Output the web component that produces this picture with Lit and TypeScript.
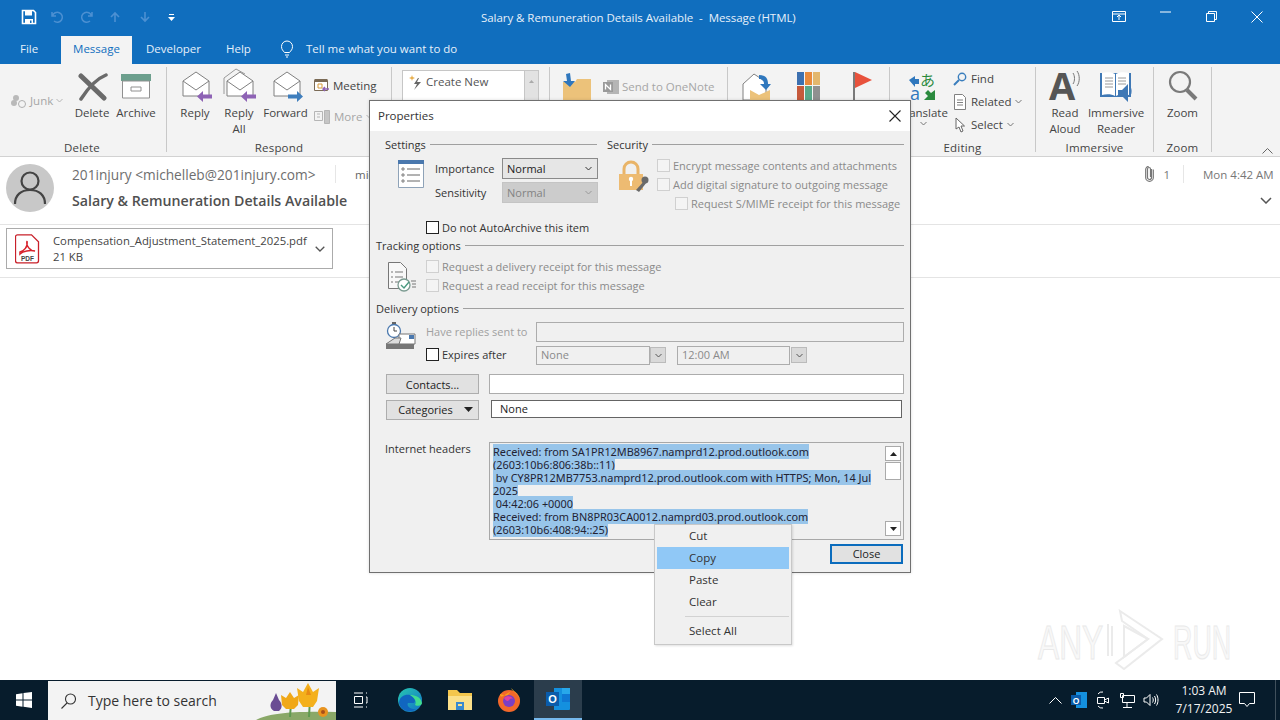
import { LitElement, html, svg, css } from "lit";
import { customElement } from "lit/decorators.js";

const chevron = (c = "#777") => html`<svg class="chev" width="7" height="5" viewBox="0 0 7 5"><path d="M.5 1l3 3 3-3" fill="none" stroke=${c}/></svg>`;

const envelope = (arrow: string, dir: "l" | "r", double = false) => html`<svg width="36" height="38" viewBox="0 0 36 38">
  ${double ? svg`<path d="M3 27V11L15 2l9 5" fill="none" stroke="#999"/>` : ""}
  <path d="M6 14L19 5l13 9v15H6z" fill="#fff" stroke="#808080"/>
  <path d="M6 14l13 9 13-9" fill="none" stroke="#808080"/>
  ${dir === "l"
    ? svg`<path d="M35 27.500H26v-3.500l-6 5.500 6 5.500v-3.500h9z" fill=${arrow}/>`
    : svg`<path d="M20 27.500h9v-3.500l6 5.500-6 5.500v-3.500h-9z" fill=${arrow}/>`}
</svg>`;

const check = (disabled = false) => html`<span class="box ${disabled ? "off" : ""}"></span>`;

@customElement("app-root")
export class AppRoot extends LitElement {
  static styles = css`
    :host {
      display: flex;
      flex-direction: column;
      position: relative;
      width: 1280px;
      height: 720px;
      overflow: hidden;
      background: #fff;
      font-family: "Open Sans", "Noto Sans", sans-serif;
      font-size: 11.5px;
      color: #444;
    }
    svg { display: block; flex: none; }

    /* title + tabs */
    .title {
      height: 36px;
      background: #106ebe;
      color: #e6f0fa;
      display: flex;
      align-items: center;
      flex: none;
      position: relative;
      padding-bottom: 2px;
      box-sizing: border-box;
    }
    .qat { display: flex; align-items: center; padding-left: 21px; width: 400px; }
    .qat span { width: 29.4px; display: flex; }
    .doc { width: 478px; padding-left: 60px; white-space: pre; letter-spacing: -.05px; }
    .winbtns { display: flex; margin-left: auto; padding-right: 0; }
    .winbtns span { width: 46px; display: flex; justify-content: center; }
    .tabs {
      height: 28px;
      background: #106ebe;
      color: #e6f0fa;
      display: flex;
      align-items: stretch;
      flex: none;
    }
    .tabs > span { display: flex; align-items: center; padding-bottom: 3px; box-sizing: border-box; }
    .tab-file { padding-left: 20px; width: 61px; }
    .tab-on { background: #f3f3f3; color: #106ebe; width: 71px; justify-content: center; }
    .tab-dev { margin-left: 14px; width: 80px; }
    .tab-help { width: 54px; }
    .tab-tell { width: 200px; gap: 12px; }

    /* ribbon */
    .ribbon {
      height: 93px;
      flex: none;
      background: #f3f3f3;
      border-bottom: 1px solid #d2d2d2;
      box-sizing: border-box;
      display: flex;
      padding: 3px 0 4px;
      position: relative;
    }
    .group {
      display: flex;
      flex-direction: column;
      border-right: 1px solid #c8c8c8;
      box-sizing: border-box;
      flex: none;
    }
    .items { display: flex; flex: 1; align-items: flex-start; }
    .glabel { text-align: center; height: 12px; line-height: 15px; letter-spacing: .2px; }
    .big {
      display: flex;
      flex-direction: column;
      align-items: center;
      line-height: 16px;
      text-align: center;
      flex: none;
    }
    .big .ico { height: 38px; display: flex; align-items: flex-start; justify-content: center; }
    .small { display: flex; align-items: center; gap: 4px; height: 23px; white-space: nowrap; }
    .dis { color: #a6a6a6; }
    .gallery {
      margin: 3px 0 0 10px;
      width: 137px;
      height: 34px;
      display: flex;
      box-sizing: border-box;
    }
    .gal-main {
      flex: 1;
      background: #fff;
      border: 1px solid #c6c6c6;
      display: flex;
      gap: 3px;
      padding: 3px 0 0 6px;
      align-items: flex-start;
      color: #555;
    }
    .gal-bar { width: 14px; background: #e2e2e2; border: 1px solid #c6c6c6; border-left: 0; display: flex; justify-content: center; padding-top: 9px; box-sizing: border-box; }
    .collapse { position: absolute; right: 7px; bottom: 2px; }
    .loose { overflow: visible; }

    /* message */
    .msg { flex: 1; background: #fff; min-height: 0; }
    .head {
      height: 68px;
      box-sizing: border-box;
      display: flex;
      padding: 7px 8px 0 6px;
      margin-left: 0;
      border-bottom: 1px solid #e4e4e4;
    }
    .avatar {
      width: 48px;
      height: 48px;
      border-radius: 50%;
      background: #c8c8c8;
      display: flex;
      align-items: center;
      justify-content: center;
      flex: none;
    }
    .hcol { flex: 1; margin-left: 18px; }
    .hline { display: flex; align-items: center; height: 22px; margin-top: -1px; }
    .sender { font-size: 13.7px; color: #6e6e6e; white-space: nowrap; width: 263px; }
    .vsep { width: 1px; height: 18px; background: #e6e6e6; flex: none; }
    .to { margin-left: 19px; color: #666; }
    .clip { margin-left: auto; display: flex; gap: 9px; align-items: center; color: #777; }
    .date { color: #777; margin-left: 19px; width: 69px; white-space: nowrap; }
    .subject { display: flex; align-items: center; justify-content: space-between; height: 26px; margin-top: 2px; font-size: 14.2px; font-weight: 600; color: #505050; }
    .attrow { height: 53px; box-sizing: border-box; padding: 3px 0 0 6px; border-bottom: 1px solid #e4e4e4; }
    .att {
      width: 327px;
      height: 41px;
      box-sizing: border-box;
      border: 1px solid #ababab;
      display: flex;
      align-items: center;
      padding-left: 8px;
    }
    .att-text { margin-left: 13px; line-height: 16px; width: 262px; white-space: nowrap; font-size: 11.3px; }

    /* dialog */
    .dlg {
      position: absolute;
      left: 369px;
      top: 100px;
      width: 542px;
      height: 473px;
      box-sizing: border-box;
      border: 1px solid #707070;
      background: #f0f0f0;
      color: #333;
      font-size: 11px;
      box-shadow: 0 0 3px rgba(0,0,0,.15);
    }
    .dtitle { height: 30px; box-sizing: border-box; padding: 0 8px 2px; background: #fff; display: flex; align-items: center; justify-content: space-between; font-size: 11.5px; }
    .dbody { padding: 6px 6px 0 6px; }
    .legend { display: flex; align-items: center; gap: 4px; height: 16px; white-space: nowrap; box-sizing: border-box; padding-bottom: 2px; }
    .legend::after { content: ""; flex: 1; height: 1px; background: #a0a0a0; }
    .top { display: flex; height: 83px; padding-left: 9px; gap: 10px; }
    .settings { width: 212px; }
    .security { flex: 1; }
    .setrow { display: flex; padding: 5px 0 0 13px; }
    .setlabels { margin-left: 11px; width: 67px; flex: none; }
    .setlabels div { height: 24px; line-height: 21px; }
    .sel {
      width: 96px;
      height: 21px;
      box-sizing: border-box;
      border: 1px solid #8a8a8a;
      background: #e6e6e6;
      display: flex;
      align-items: center;
      justify-content: space-between;
      padding: 0 5px 1px 4px;
      margin-bottom: 3px;
      color: #222;
    }
    .sel.off { background: #ccc; border-color: #c4c4c4; color: #838383; }
    .secrow { display: flex; padding: 4px 0 0 10px; }
    .secrow > svg { margin-top: 3px; }
    .secchecks { margin-left: 8px; }
    .chk { display: flex; align-items: center; gap: 3px; height: 19px; white-space: nowrap; box-sizing: border-box; padding-bottom: 2px; }
    .chk.off { color: #8a8a8a; }
    .box { width: 13px; height: 13px; box-sizing: border-box; border: 1px solid #222; background: #fff; flex: none; }
    .box.off { border-color: #d0d0d0; background: #f4f4f4; }
    .archive { margin-left: 50px; }
    .archive.chk { height: 16px; }
    .sec { margin-top: 2px; }
    .track { display: flex; padding: 4px 0 0 11px; height: 38px; }
    .track > svg { margin-top: 3px; }
    .trackchecks { margin-left: 9px; }
    .sec2 { margin-top: 5px; }
    .deliv { display: flex; padding: 5px 0 0 9px; }
    .delcol { margin-left: 10px; }
    .delrow { display: flex; align-items: center; height: 20px; }
    .delrow + .delrow { margin-top: 3px; }
    .dlabel { width: 110px; white-space: nowrap; padding-bottom: 2px; box-sizing: border-box; flex: none; }
    .dlabel.off { color: #a0a0a0; }
    .input { height: 20px; box-sizing: border-box; border: 1px solid #acacac; background: #f0f0f0; }
    .field { width: 114px; height: 19px; padding: 0 4px 2px; color: #8a8a8a; display: flex; align-items: center; }
    .arrow { width: 16px; height: 16px; box-sizing: border-box; background: #d9d9d9; border: 1px solid #bbb; display: flex; align-items: center; justify-content: center; }
    .btnrow { display: flex; padding-left: 10px; }
    .btn {
      width: 93px;
      height: 20px;
      box-sizing: border-box;
      background: #e1e1e1;
      border: 1px solid #adadad;
      display: flex;
      align-items: center;
      justify-content: center;
      color: #222;
      flex: none;
    }
    .white { background: #fff; }
    .contacts { margin-top: 9px; }
    .cats { margin-top: 6px; }
    .catbtn { gap: 11px; padding: 0 0 1px 6px; }
    .none { margin-left: 12px; width: 411px; height: 18px; border: 1px solid #646464; background: #fff; box-sizing: border-box; padding-left: 8px; line-height: 15px; color: #222; }
    .headers { display: flex; margin-top: 22px; padding-left: 9px; }
    .hlabel { width: 104px; line-height: 14px; }
    .ta {
      width: 415px;
      height: 98px;
      box-sizing: border-box;
      border: 1px solid #a8a8a8;
      display: flex;
      padding: 2px 0 0 3px;
      overflow: hidden;
    }
    .tatext { width: 391px; font-size: 10.9px; line-height: 13px; color: #223; white-space: pre; font-family: "Noto Sans", sans-serif; }
    .tatext span { background: #98c5ea; }
    .sb { width: 18px; display: flex; flex-direction: column; align-items: center; height: 90px; padding-top: 1px; flex: none; }
    .sbb { width: 16px; height: 15px; box-sizing: border-box; border: 1px solid #aaa; background: #fff; display: flex; align-items: center; justify-content: center; flex: none; }
    .thumb { width: 16px; height: 18px; box-sizing: border-box; border: 1px solid #aaa; background: #fff; margin-top: 1px; }
    .sbfill { flex: 1; }
    .closerow { display: flex; justify-content: flex-end; margin-top: 4px; padding-right: 1px; }
    .closebtn { width: 73px; border: 2px solid #0b6cbd; padding-bottom: 1px; }

    /* context menu */
    .menu {
      position: absolute;
      left: 654px;
      top: 524px;
      width: 138px;
      height: 121px;
      box-sizing: border-box;
      background: #f0f0f0;
      border: 1px solid #c8c8c8;
      padding: 0 2px;
      font-size: 11.5px;
      color: #333;
      box-shadow: 1px 1px 2px rgba(0,0,0,.12);
    }
    .mi { height: 22px; line-height: 21px; padding-left: 32px; }
    .mi.hot { background: #90c8f6; }
    .msep { height: 1px; background: #d2d2d2; margin: 3px 0 3px 28px; }

    /* watermark */
    .wm { position: absolute; left: 1038px; top: 608px; display: flex; align-items: center; height: 64px; }
    .wm span {
      font-family: "Liberation Sans", sans-serif;
      font-size: 48px;
      color: #f8f8f8;
      -webkit-text-stroke: 1px #e9e9e9;
      transform: scaleX(.66) translateY(2px);
      transform-origin: left center;
      width: 66px;
      display: block;
      white-space: nowrap;
      flex: none;
    }
    .wm span.run { margin-left: 9px; transform: scaleX(.56) translateY(2px); }

    /* taskbar */
    .taskbar { height: 40px; flex: none; background: #071c2c; display: flex; align-items: stretch; color: #fff; }
    .start { width: 48px; display: flex; align-items: center; justify-content: center; flex: none; }
    .search {
      width: 288px;
      margin-top: 1px;
      background: #f3f3f3;
      display: flex;
      align-items: center;
      color: #333;
      font-size: 14px;
      padding-left: 13px;
      box-sizing: border-box;
      overflow: hidden;
      flex: none;
    }
    .search .q { margin-left: 12px; white-space: nowrap; }
    .search .art { margin-left: auto; align-self: flex-end; }
    .tb { width: 49.500px; display: flex; align-items: center; justify-content: center; box-sizing: border-box; flex: none; }
    .tb.on { background: #2b3d4c; border-bottom: 2px solid #76b9ed; width: 48px; }
    .spacer { flex: 1; }
    .tray { width: 24px; display: flex; align-items: center; justify-content: center; flex: none; }
    .clock { width: 58px; margin-left: 12px; text-align: center; font-size: 12px; line-height: 18px; padding-top: 2px; box-sizing: border-box; color: #f2f2f2; white-space: nowrap; flex: none; display: flex; flex-direction: column; align-items: center; }
    .note { width: 28px; margin-right: 14px; display: flex; align-items: center; justify-content: center; flex: none; }
    .edge { width: 1px; background: #40505c; margin-right: 4px; flex: none; }
  `;

  render() {
    return html`
      ${this.renderTitle()}
      ${this.renderRibbon()}
      ${this.renderMessage()}
      ${this.renderTaskbar()}
      ${this.renderDialog()}
      ${this.renderMenu()}
      <div class="wm">
        <span>ANY</span>
        <svg width="60" height="64" viewBox="0 0 60 64" fill="none" stroke="#ebebeb" stroke-width="2"><path d="M8 18v30M4 16v32"/><path d="M16 3l42 28-38 30-8-6 32-24-26-18z"/><path d="M20 18l24 13-24 18z"/></svg>
        <span class="run">RUN</span>
      </div>
    `;
  }

  renderTitle() {
    const f = "#4c90d2";
    return html`
      <div class="title">
        <div class="qat">
          <span><svg width="16" height="16" viewBox="0 0 16 16"><path d="M1.500 1.500h11l2 2v11h-13z" fill="none" stroke="#fff" stroke-width="1.600"/><path d="M4 2h7v4.500H4zM4 10h8v5H4z" fill="#fff"/><path d="M9 11.500h1.500V14H9z" fill="#106ebe"/></svg></span>
          <span><svg width="14" height="14" viewBox="0 0 14 14" fill="none" stroke=${f} stroke-width="1.500"><path d="M2 2v4h4M2.500 6A5 5 0 1 1 4 11"/></svg></span>
          <span><svg width="14" height="14" viewBox="0 0 14 14" fill="none" stroke=${f} stroke-width="1.500"><path d="M12 2v4H8M11.500 6A5 5 0 1 0 10 11"/></svg></span>
          <span><svg width="12" height="12" viewBox="0 0 12 12" fill="none" stroke=${f} stroke-width="1.600"><path d="M6 11V2M2 6l4-4 4 4"/></svg></span>
          <span><svg width="12" height="12" viewBox="0 0 12 12" fill="none" stroke=${f} stroke-width="1.600"><path d="M6 1v9M2 6l4 4 4-4"/></svg></span>
          <span><svg width="7" height="8" viewBox="0 0 7 8"><path d="M1 1h5v1H1zM0 4h7L3.500 8z" fill="#fff"/></svg></span>
        </div>
        <div class="doc">Salary &amp; Remuneration Details Available  -  Message (HTML)</div>
        <div class="winbtns">
          <span><svg width="14" height="12" viewBox="0 0 14 12" fill="none" stroke="#fff"><path d="M.5.500h13v10H.5zM.5 3h13M7 9V4.500M5 6l2-2 2 2"/></svg></span>
          <span><svg width="11" height="2" viewBox="0 0 11 2"><path d="M0 1h11" stroke="#fff"/></svg></span>
          <span><svg width="11" height="11" viewBox="0 0 11 11" fill="none" stroke="#fff"><path d="M.5 2.500h8v8h-8zM2.500 2.500v-2h8v8h-2"/></svg></span>
          <span><svg width="12" height="12" viewBox="0 0 12 12" stroke="#fff"><path d="M.5.500l11 11M11.500.500l-11 11"/></svg></span>
        </div>
      </div>
      <div class="tabs">
        <span class="tab-file">File</span>
        <span class="tab-on">Message</span>
        <span class="tab-dev">Developer</span>
        <span class="tab-help">Help</span>
        <span class="tab-tell">
          <svg width="14" height="18" viewBox="0 0 14 18" fill="none" stroke="#fff"><path d="M4.500 12.500C3 10.500 1.500 9.500 1.500 6.500a5.500 5.500 0 0 1 11 0c0 3-1.500 4-3 6zM5 15h4M6 17h2"/></svg>
          <span style="white-space:nowrap">Tell me what you want to do</span>
        </span>
      </div>
    `;
  }

  renderRibbon() {
    return html`
      <div class="ribbon">
        <div class="group" style="width:167px">
          <div class="items" style="padding-left:10px">
            <div class="small dis" style="width:60px;margin-top:22px;gap:3px;padding-left:1px;box-sizing:border-box">
              <svg width="16" height="16" viewBox="0 0 16 16" fill="#b9b9b9"><circle cx="5" cy="5" r="3"/><circle cx="3" cy="10" r="3"/><circle cx="11" cy="11" r="3.500" fill="none" stroke="#b0b0b0"/></svg>
              <span>Junk</span>${chevron("#b5b5b5")}
            </div>
            <div class="big" style="width:44px">
              <div class="ico"><svg width="32" height="34" viewBox="0 0 32 34"><path d="M5 9l23 22" stroke="#6a6a6a" stroke-width="5" stroke-linecap="round"/><path d="M30 8C20 12 12 21 5 32" fill="none" stroke="#6a6a6a" stroke-width="3.500" stroke-linecap="round"/></svg></div>
              <span>Delete</span>
            </div>
            <div class="big" style="width:44px">
              <div class="ico"><svg width="32" height="34" viewBox="0 0 32 34"><path d="M1 7h30v7H1z" fill="#6c9f8d"/><path d="M2.500 14h27v17h-27z" fill="#fff" stroke="#909090"/><path d="M11 20h10v4H11z" fill="none" stroke="#909090"/></svg></div>
              <span>Archive</span>
            </div>
          </div>
          <div class="glabel" style="padding-right:2px">Delete</div>
        </div>

        <div class="group" style="width:225px">
          <div class="items" style="padding-left:5px">
            <div class="big" style="width:46px"><div class="ico">${envelope("#8e63b5", "l")}</div><span>Reply</span></div>
            <div class="big" style="width:42px"><div class="ico">${envelope("#8e63b5", "l", true)}</div><span>Reply<br />All</span></div>
            <div class="big" style="width:51px"><div class="ico">${envelope("#3f7ebd", "r")}</div><span>Forward</span></div>
            <div style="padding:7px 0 0 3px">
              <div class="small" style="height:23px">
                <svg width="15" height="15" viewBox="0 0 15 15"><path d="M.5 2.500h13v10H.5z" fill="#fff" stroke="#7a6a55"/><path d="M.5 1h13v3H.5z" fill="#7a6a55"/><path d="M4 6h4v4H4z" fill="none" stroke="#d69a3b"/><path d="M15 11H9m2-2l-2 2 2 2" fill="none" stroke="#8e63b5" stroke-width="1.500"/></svg>
                <span>Meeting</span>
              </div>
              <div class="small dis" style="margin-top:8px">
                <svg width="16" height="15" viewBox="0 0 16 15" fill="none" stroke="#b5b5b5"><path d="M.5 2.500h8v9h-8zM3 5h3M3 8h3"/><path d="M10.500 1.500h5v13h-5z" fill="#c5c5c5"/></svg>
                <span>More</span>${chevron("#b5b5b5")}
              </div>
            </div>
          </div>
          <div class="glabel">Respond</div>
        </div>

        <div class="group" style="width:158px">
          <div class="gallery">
            <div class="gal-main">
              <svg width="14" height="16" viewBox="0 0 14 16" style="margin-top:1px"><path d="M9 3L5 9h3l-3 6 7-8H8l2-4z" fill="#666"/><path d="M3 0l.7 2L6 3 3.700 4 3 6 2.300 4 0 3l2.300-1z" fill="#e8b04f"/></svg>
              <span>Create New</span>
            </div>
            <div class="gal-bar"><svg width="5" height="3" viewBox="0 0 5 3"><path d="M0 3l2.500-3L5 3z" fill="#aaa"/></svg></div>
          </div>
        </div>

        <div class="group" style="width:178px">
          <div class="items">
            <div style="margin:5px 0 0 12px"><svg width="30" height="30" viewBox="0 0 30 30"><path d="M1 10h12l2-3h14v23H1z" fill="#ecc27a"/><path d="M4 2l1 7H1l7 6 5-6H9L8 1z" fill="#2f77bd"/></svg></div>
            <div class="small dis" style="margin:8px 0 0 11px;gap:3px">
              <svg width="16" height="16" viewBox="0 0 16 16"><path d="M4 1h12v14H4z" fill="#b5b5b5"/><path d="M0 3h10v10H0z" fill="#9a9a9a"/><path d="M2.500 10.500v-5l5 5v-5" fill="none" stroke="#fff" stroke-width="1.300"/></svg>
              <span>Send to OneNote</span>
            </div>
          </div>
        </div>

        <div class="group" style="width:162px">
          <div class="items">
            <div style="margin:5px 0 0 14px"><svg width="31" height="30" viewBox="0 0 31 30"><path d="M1 12L12 2l12 8v18H1z" fill="#fff" stroke="#808080"/><path d="M8 18l9 5 11-5v12H8z" fill="#ecc27a"/><path d="M17 3c6 0 9 3 9 9h3l-5 6-6-6h4c0-3-2-5-5-5z" fill="#2f77bd"/></svg></div>
            <div style="margin:5px 0 0 24px"><svg width="23" height="30" viewBox="0 0 23 30"><path d="M0 0h7v13H0z" fill="#3c70b0"/><path d="M8 0h7v13H8z" fill="#e88a3c"/><path d="M16 0h7v13h-7z" fill="#e3b76d"/><path d="M0 14h7v16H0z" fill="#c65a3c"/><path d="M8 14h7v16H8z" fill="#5aa88a"/><path d="M16 14h7v16h-7z" fill="#909090"/></svg></div>
            <div style="margin:5px 0 0 33px"><svg width="20" height="30" viewBox="0 0 20 30"><path d="M0 0h2v30H0z" fill="#7a7a7a"/><path d="M2 0l17 8-17 8z" fill="#e8523c"/></svg></div>
          </div>
        </div>

        <div class="group" style="width:146px">
          <div class="items">
            <div class="big" style="width:56px;margin-left:5px">
              <div class="ico" style="padding-top:5px;box-sizing:border-box">
                <svg class="loose" width="28" height="30" viewBox="0 0 28 30">
                  <path d="M0 8l6-4v3h4v5H6v3z" fill="#2f77bd"/>
                  <text x="11" y="14" font-size="15" fill="#2b8a3e" font-family="'Noto Sans CJK JP',sans-serif">あ</text>
                  <text x="1" y="28" font-size="18" fill="#2f77bd" font-family="'Open Sans',sans-serif">a</text>
                  <path d="M26 18v10H15l4-4-3-3 3-3 3 3z" fill="#2b8a3e"/>
                </svg>
              </div>
              <span>Translate</span>
              ${chevron()}
            </div>
            <div style="padding:0 0 0 2px">
              <div class="small">
                <svg width="14" height="14" viewBox="0 0 14 14" fill="none"><circle cx="9" cy="5" r="3.700" stroke="#3a7ebd" stroke-width="1.400"/><path d="M6 8l-5 5" stroke="#3a7ebd" stroke-width="2"/></svg>
                <span>Find</span>
              </div>
              <div class="small">
                <svg width="14" height="16" viewBox="0 0 14 16" fill="#fff" stroke="#808080"><path d="M1.500.5h8l3 3v12h-11z"/><path d="M4 6h6M4 8.500h6M4 11h6"/></svg>
                <span>Related</span>${chevron()}
              </div>
              <div class="small">
                <svg width="14" height="16" viewBox="0 0 14 16" fill="#fff" stroke="#666"><path d="M3 1v11l3-2 2 5 2-1-2-5h3.500z"/></svg>
                <span>Select</span>${chevron()}
              </div>
            </div>
          </div>
          <div class="glabel">Editing</div>
        </div>

        <div class="group" style="width:118px">
          <div class="items" style="padding-left:4px">
            <div class="big" style="width:50px">
              <div class="ico">
                <svg class="loose" width="32" height="36" viewBox="0 0 32 36"><text x="0" y="33" font-size="38" font-weight="700" fill="#555" font-family="'Open Sans',sans-serif">A</text><path d="M24 6c2 3 2 8 0 11M28 4c3 4 3 11 0 15" fill="none" stroke="#777"/></svg>
              </div>
              <span>Read<br />Aloud</span>
            </div>
            <div class="big" style="width:52px">
              <div class="ico">
                <svg width="34" height="35" viewBox="0 0 34 35"><g transform="translate(0 4)"><path d="M1 2h31v24H1z" fill="#3f78b5"/><path d="M3 2c4-1 10-1 13 1v22c-3-2-9-2-13-1zM17 3c3-2 9-2 13-1v22c-4-1-10-1-13 1z" fill="#fff"/><path d="M6 7h8M6 10h8M6 13h8M6 16h8M19 7h8M19 10h8M19 13h8" stroke="#9a9a9a"/><path d="M19 19h4l6-6v18l-6-6h-4z" fill="#3f78b5"/><path d="M31 16c1.500 2 1.500 6 0 9" fill="none" stroke="#3f78b5"/></g></svg>
              </div>
              <span>Immersive<br />Reader</span>
            </div>
          </div>
          <div class="glabel">Immersive</div>
        </div>

        <div class="group" style="width:58px">
          <div class="items" style="justify-content:center">
            <div class="big">
              <div class="ico"><svg width="32" height="34" viewBox="0 0 32 34" fill="none"><circle cx="13" cy="15" r="10" stroke="#7a7a7a" stroke-width="2.200"/><path d="M20 23l9 9" stroke="#7a7a7a" stroke-width="4"/></svg></div>
              <span>Zoom</span>
            </div>
          </div>
          <div class="glabel">Zoom</div>
        </div>
        <div class="collapse"><svg width="11" height="6" viewBox="0 0 11 6"><path d="M.5 5.500l5-5 5 5" fill="none" stroke="#666"/></svg></div>
      </div>
    `;
  }

  renderMessage() {
    return html`
      <div class="msg">
        <div class="head">
          <div class="avatar">
            <svg width="34" height="36" viewBox="0 0 34 36" fill="none" stroke="#444" stroke-width="2.200"><circle cx="17" cy="11" r="8.500"/><path d="M2 34c0-9 6-14 15-14s15 5 15 14"/></svg>
          </div>
          <div class="hcol">
            <div class="hline">
              <span class="sender">201injury &lt;michelleb@201injury.com&gt;</span>
              <span class="vsep"></span>
              <span class="to">mic</span>
              <span class="clip">
                <svg width="9" height="16" viewBox="0 0 9 16" fill="none" stroke="#777" stroke-width="1.200"><path d="M6.500 3v8.500a2 2 0 0 1-4 0V3a1.500 1.500 0 0 1 3 0v8"/><path d="M8.300 3.500v8a3.800 3.800 0 0 1-7.600 0v-8a3 3 0 0 1 3-3"/></svg>
                <span>1</span>
              </span>
              <span class="vsep" style="margin-left:13px"></span>
              <span class="date">Mon 4:42 AM</span>
            </div>
            <div class="subject">
              <span>Salary &amp; Remuneration Details Available</span>
              <svg width="12" height="7" viewBox="0 0 12 7"><path d="M1 1l5 5 5-5" fill="none" stroke="#555" stroke-width="1.500"/></svg>
            </div>
          </div>
        </div>
        <div class="attrow">
          <div class="att">
            <svg width="25" height="30" viewBox="0 0 25 30">
              <path d="M2.500.8h14l7 7v19a2 2 0 0 1-2 2h-19a2 2 0 0 1-2-2v-24a2 2 0 0 1 2-2z" fill="#fff" stroke="#c8202a" stroke-width="1.300"/>
              <path d="M5 18c4-1 8-5 7-11-1 5 3 10 8 10-5-1-12 0-15 3z" fill="none" stroke="#d8202a" stroke-width="1.500"/>
              <text x="12.500" y="26.500" font-size="6.500" font-weight="700" text-anchor="middle" fill="#444" font-family="'Liberation Sans',sans-serif">PDF</text>
            </svg>
            <div class="att-text">Compensation_Adjustment_Statement_2025.pdf<br />21 KB</div>
            <svg width="10" height="6" viewBox="0 0 10 6"><path d="M.7.7L5 5l4.300-4.300" fill="none" stroke="#555" stroke-width="1.300"/></svg>
          </div>
        </div>
      </div>
    `;
  }

  renderDialog() {
    return html`
      <div class="dlg">
        <div class="dtitle">
          <span>Properties</span>
          <svg width="12" height="12" viewBox="0 0 12 12" stroke="#222" stroke-width="1.100" style="margin:1px 1px 0 0"><path d="M.5.500l11 11M11.500.500l-11 11"/></svg>
        </div>
        <div class="dbody">
          <div class="top">
            <div class="settings">
              <div class="legend">Settings</div>
              <div class="setrow">
                <svg width="26" height="28" viewBox="0 0 26 28" style="margin-top:2px"><path d="M.5.500h25v27H.500z" fill="#fff" stroke="#8fa3b8"/><path d="M0 0h26v4H0z" fill="#4a78ae"/><path d="M9 9h13M9 15h13M9 21h13" stroke="#666"/><path d="M4 8h2v2H4zM4 14h2v2H4zM4 20h2v2H4z" fill="none" stroke="#666" stroke-width=".8"/></svg>
                <div class="setlabels"><div>Importance</div><div>Sensitivity</div></div>
                <div>
                  <div class="sel"><span>Normal</span>${chevron("#333")}</div>
                  <div class="sel off"><span>Normal</span>${chevron("#999")}</div>
                </div>
              </div>
            </div>
            <div class="security">
              <div class="legend">Security</div>
              <div class="secrow">
                <svg width="32" height="32" viewBox="0 0 32 32"><path d="M7 14V9a7 7 0 0 1 14 0v5" fill="none" stroke="#e9b468" stroke-width="3"/><path d="M2 14h24v16H2z" fill="#edbb72"/><path d="M13 19h2v7h-2z" fill="#fff"/><circle cx="14" cy="19" r="2.200" fill="#fff"/><path d="M19 30l9-10 2 2-8 10z" fill="#6a6a6a"/><circle cx="28" cy="20" r="3.500" fill="#6a6a6a"/></svg>
                <div class="secchecks">
                  <div class="chk off">${check(true)}<span>Encrypt message contents and attachments</span></div>
                  <div class="chk off">${check(true)}<span>Add digital signature to outgoing message</span></div>
                  <div class="chk off" style="margin-left:18px">${check(true)}<span>Request S/MIME receipt for this message</span></div>
                </div>
              </div>
            </div>
          </div>
          <div class="chk archive">${check()}<span>Do not AutoArchive this item</span></div>
          <div class="legend sec">Tracking options</div>
          <div class="track">
            <svg width="30" height="32" viewBox="0 0 30 32" fill="none" stroke="#777"><path d="M1.500 1.500h12l6 6v20h-18z" fill="#f8f8f8"/><path d="M4 11h2M8 11h8M4 16h2M8 16h8M4 21h2M8 21h4"/><circle cx="17" cy="24" r="6" fill="#fff" stroke="#7a9a90" stroke-width="1.300"/><path d="M14 24l3 3 5-6" stroke="#4a9a80" stroke-width="1.400"/><path d="M24 20h5M25 23h4M25 26h4"/></svg>
            <div class="trackchecks">
              <div class="chk off">${check(true)}<span>Request a delivery receipt for this message</span></div>
              <div class="chk off">${check(true)}<span>Request a read receipt for this message</span></div>
            </div>
          </div>
          <div class="legend sec2">Delivery options</div>
          <div class="deliv">
            <svg width="31" height="30" viewBox="0 0 31 30"><circle cx="9" cy="9" r="6.500" fill="#fff" stroke="#4a78ae" stroke-width="1.300"/><path d="M9 5v4h3" fill="none" stroke="#444"/><path d="M7 0h4v2H7z" fill="#666"/><path d="M14 12h16v10H14z" fill="#fff" stroke="#777"/><path d="M24 13h5v4h-5z" fill="#4a78ae"/><path d="M1 22l9-6h6l-2 6z" fill="#ddd" stroke="#777"/><path d="M1 22h28v5H1z" fill="#777"/></svg>
            <div class="delcol">
              <div class="delrow">
                <span class="dlabel off">Have replies sent to</span>
                <span class="input" style="width:368px"></span>
              </div>
              <div class="delrow">
                <span class="dlabel chk">${check()}<span>Expires after</span></span>
                <span class="input field">None</span>
                <span class="arrow">${chevron("#555")}</span>
                <span class="input field" style="margin-left:11px;width:113px">12:00 AM</span>
                <span class="arrow" style="margin-left:1px">${chevron("#555")}</span>
              </div>
            </div>
          </div>
          <div class="btnrow contacts">
            <span class="btn">Contacts...</span>
            <span class="input white" style="width:415px;margin-left:10px"></span>
          </div>
          <div class="btnrow cats">
            <span class="btn catbtn"><span>Cate<u>g</u>ories</span><svg width="9" height="5" viewBox="0 0 9 5"><path d="M0 0h9L4.500 5z" fill="#222"/></svg></span>
            <span class="none">None</span>
          </div>
          <div class="headers">
            <div class="hlabel">Internet headers</div>
            <div class="ta">
              <div class="tatext"><span>Received: from SA1PR12MB8967.namprd12.prod.outlook.com</span>
<span>(2603:10b6:806:38b::11)</span>
<span> by CY8PR12MB7753.namprd12.prod.outlook.com with HTTPS; Mon, 14 Jul</span>
<span>2025</span>
<span> 04:42:06 +0000</span>
<span>Received: from BN8PR03CA0012.namprd03.prod.outlook.com</span>
<span>(2603:10b6:408:94::25)</span></div>
              <div class="sb">
                <span class="sbb"><svg width="7" height="4" viewBox="0 0 7 4"><path d="M0 4l3.500-4L7 4z" fill="#222"/></svg></span>
                <span class="thumb"></span>
                <span class="sbfill"></span>
                <span class="sbb"><svg width="7" height="4" viewBox="0 0 7 4"><path d="M0 0l3.500 4L7 0z" fill="#222"/></svg></span>
              </div>
            </div>
          </div>
          <div class="closerow"><span class="btn closebtn">Close</span></div>
        </div>
      </div>
    `;
  }

  renderMenu() {
    return html`
      <div class="menu">
        <div class="mi">Cut</div>
        <div class="mi hot">Copy</div>
        <div class="mi">Paste</div>
        <div class="mi">Clear</div>
        <div class="msep"></div>
        <div class="mi">Select All</div>
      </div>
    `;
  }

  renderTaskbar() {
    return html`
      <div class="taskbar">
        <div class="start"><svg width="16" height="16" viewBox="0 0 16 16" fill="#fff"><path d="M0 2.300l6.500-1v6.300H0zM7.500 1.100L16 0v7.600H7.500zM0 8.500h6.500v6.300l-6.500-1zM7.500 8.500H16V16l-8.500-1.200z"/></svg></div>
        <div class="search">
          <svg width="15" height="16" viewBox="0 0 15 16" fill="none" stroke="#333" stroke-width="1.100"><circle cx="9.500" cy="6" r="5"/><path d="M6 10l-5.500 5.500"/></svg>
          <span class="q">Type here to search</span>
          <svg class="art" width="80" height="39" viewBox="0 0 80 39">
            <path d="M0 39c12-6 30-9 80-8v8z" fill="#8aa868"/>
            <path d="M18 30c-5-3-4-8-1-11l3-7 3 7c3 3 4 8 0 11z" fill="#6a4c93"/>
            <path d="M34 36l1-14M53 36l1-18" stroke="#5f9a50" stroke-width="2"/>
            <path d="M26 24l-1-10 5 3 4-6 4 6 5-3-1 10-4 4h-8z" fill="#f0a818"/>
            <path d="M43 20l-2-13 6 4 5-9 5 9 6-4-2 13-4 6h-10z" fill="#f4b01c"/>
            <path d="M50 14l2-8 3 8z" fill="#e88a14"/>
            <circle cx="67" cy="31" r="5" fill="#e89420"/><circle cx="67" cy="31" r="2" fill="#a8501a"/>
          </svg>
        </div>
        <div class="tb"><svg width="17" height="16" viewBox="0 0 17 16" fill="none" stroke="#fff"><path d="M2 1h9M2 15h9M2.500 4.500h8v7h-8z"/><path d="M14 1h1M14 5h1v6h-1M14 15h1"/></svg></div>
        <div class="tb"><svg width="24" height="24" viewBox="0 0 24 24"><defs><linearGradient id="e" x1="0" y1="0" x2="1" y2="1"><stop offset="0" stop-color="#27c8b0"/><stop offset="1" stop-color="#1272c8"/></linearGradient></defs><circle cx="12" cy="12" r="12" fill="url(#e)"/><path d="M1 15C1 8 8 6 12 7c5 1 6 6 4 8h-6c-2 3 3 7 8 6-5 4-15 3-17-6z" fill="#1066c0"/><path d="M12 7c5 0 11 2 12 8 0 2-3 4-7 2 2-3 0-7-5-10z" fill="#40dc90"/></svg></div>
        <div class="tb"><svg width="24" height="22" viewBox="0 0 24 22"><path d="M0 1h9l3 3h12v17H0z" fill="#f3c64d"/><path d="M0 7h24v14H0z" fill="#fbe08a"/><path d="M8 13h8v8H8z" fill="#3a8ad0"/><path d="M10 15h4v2h-4z" fill="#fbe08a"/></svg></div>
        <div class="tb"><svg width="24" height="24" viewBox="0 0 24 24"><circle cx="12" cy="13" r="11" fill="#f2682a"/><path d="M14 0c2 4 8 6 9 13 0-5-4-8-9-13z" fill="#fbb71e"/><path d="M3 6c0 3 2 3 3 2l8-5-4 5z" fill="#f9a01b"/><circle cx="12" cy="13" r="6" fill="#7a3fc4"/><path d="M7 10c3-3 8-2 9 1-2-1-3 0-4 1-1 2-3 1-5-2z" fill="#e040a0"/></svg></div>
        <div class="tb on"><svg width="24" height="22" viewBox="0 0 24 22"><path d="M8 0h15a1 1 0 0 1 1 1v20a1 1 0 0 1-1 1H8z" fill="#1490df"/><path d="M16 0h8v6h-8z" fill="#28a8ea"/><path d="M16 6h8v8h-8z" fill="#0f78d4"/><path d="M0 4h13v14H0z" fill="#0a5cab"/><text x="6.500" y="15" font-size="11" font-weight="700" text-anchor="middle" fill="#fff" font-family="'Liberation Sans',sans-serif">O</text></svg></div>
        <div class="spacer"></div>
        <div class="tray"><svg width="13" height="7" viewBox="0 0 13 7"><path d="M.5 6.500l6-6 6 6" fill="none" stroke="#fff"/></svg></div>
        <div class="tray"><svg width="16" height="16" viewBox="0 0 16 16"><path d="M5 0h11v16H5z" fill="#1490df"/><path d="M0 3h10v10H0z" fill="#0a5cab"/><text x="5" y="11.500" font-size="8.500" font-weight="700" text-anchor="middle" fill="#fff" font-family="'Liberation Sans',sans-serif">O</text></svg></div>
        <div class="tray"><svg width="14" height="18" viewBox="0 0 14 18" fill="none" stroke="#fff"><path d="M2 3a5 5 0 0 1 5-2M2 15a5 5 0 0 0 5 2"/><path d="M1.500 6.500h7v6h-7zM8.500 9l4-2v5l-4-2"/></svg></div>
        <div class="tray"><svg width="16" height="15" viewBox="0 0 16 15" fill="none" stroke="#fff"><path d="M3.500 2.500h12v7h-12zM1.500.5h3v4h-3zM8 9.500v5M4 14.500h9"/></svg></div>
        <div class="tray"><svg width="16" height="14" viewBox="0 0 16 14" fill="none" stroke="#fff"><path d="M1 5h2.500L7 1.500v11L3.500 9H1z"/><path d="M9.500 4.500c1 1.500 1 3.500 0 5M11.500 3c1.500 2.500 1.500 5.500 0 8M13.500 1.500c2 3 2 8 0 11"/></svg></div>
        <div class="clock"><span>1:03 AM</span><span>7/17/2025</span></div>
        <div class="note"><svg width="16" height="16" viewBox="0 0 16 16" fill="none" stroke="#fff"><path d="M.5.500h15v11h-5L8 14.500 5.500 11.500h-5z"/></svg></div>
        <div class="edge"></div>
      </div>
    `;
  }
}
